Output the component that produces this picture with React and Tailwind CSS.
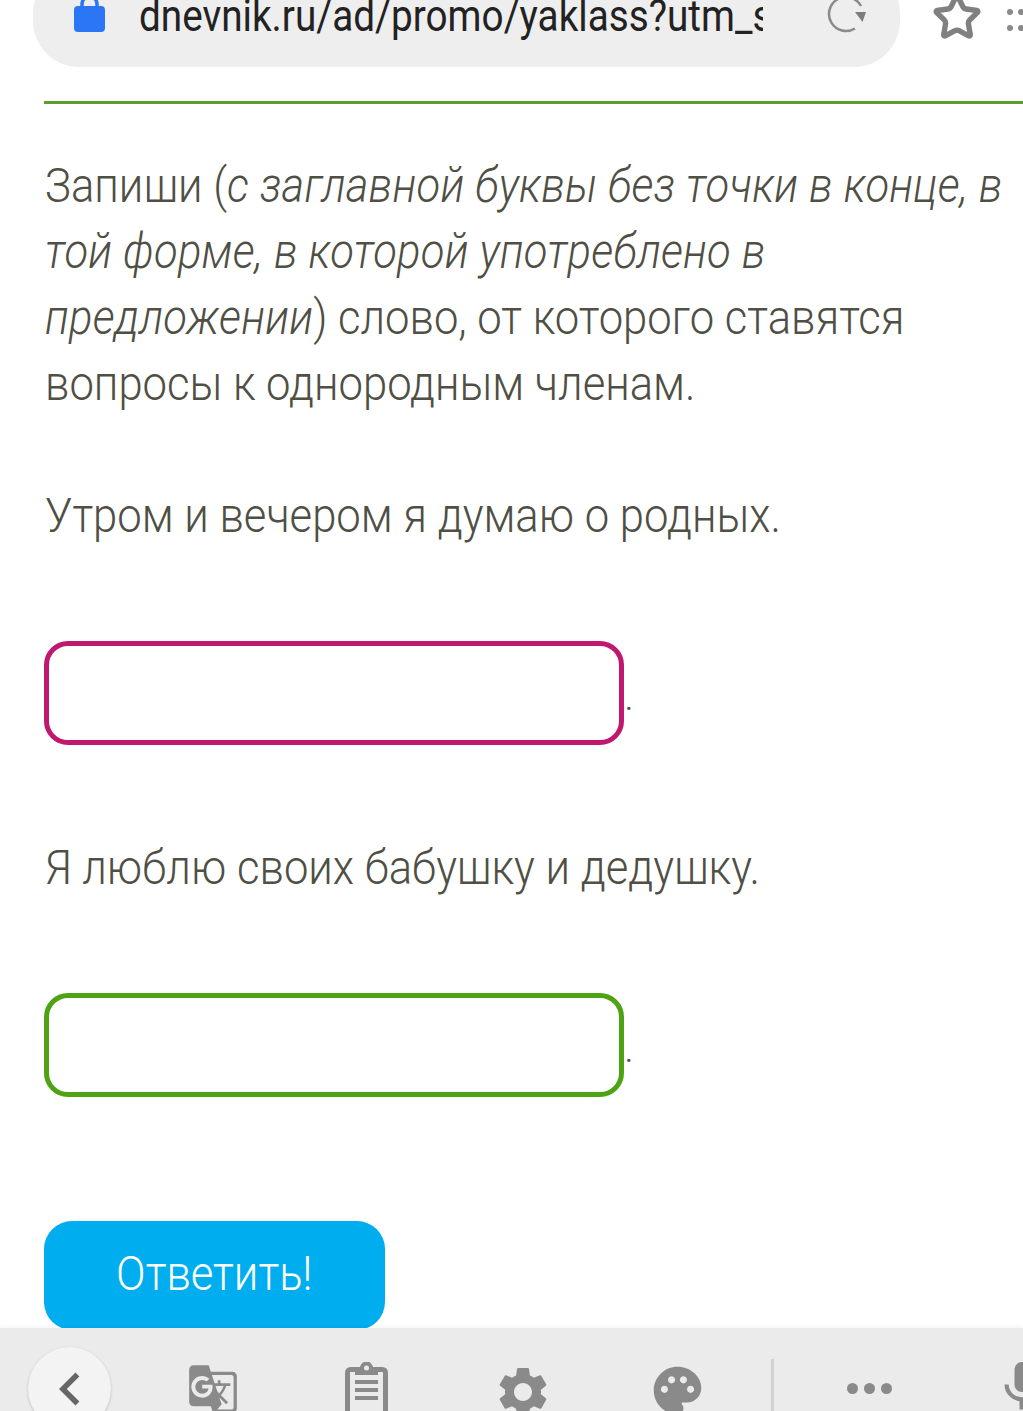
import React from "react";
import { Star } from "lucide-react";
import { MdGTranslate, MdSettings, MdPalette, MdMic, MdChevronLeft } from "react-icons/md";

const Field = ({ border }) => (
  <div className="flex items-end">
    <div className={`w-[580px] h-[104px] rounded-[24px] border-[5px] bg-white shrink-0 ${border}`}></div>
    <span className="text-[#555] text-[30px] font-normal leading-none ml-[1px] mb-[30px]">.</span>
  </div>
);

const Line = ({ children }) => (
  <div className="h-[66px] leading-[66px] whitespace-nowrap origin-left scale-x-[0.89] w-[1100px]">{children}</div>
);

const Em = ({ children }) => <i className="tracking-[0.25px]">{children}</i>;

export default function App() {
  return (
    <div className="h-[1411px] w-[1023px] overflow-hidden bg-white flex flex-col font-['Roboto',sans-serif]">
      {/* address bar */}
      <div className="flex items-center h-[67px] shrink-0 overflow-hidden">
        <div className="ml-[33px] w-[867px] h-[100px] -mt-[33px] shrink-0 rounded-[46px] bg-[#eeeeee] flex items-center pl-[41px]">
          <svg width="31" height="36" viewBox="0 0 31 36" className="shrink-0 -mt-[7px]">
            <path d="M8 14V8a7.5 7.5 0 0 1 15 0v6" fill="none" stroke="#2a76f5" strokeWidth="3.5" />
            <rect x="0" y="10" width="31" height="26" rx="4" fill="#2a76f5" />
          </svg>
          <div className="ml-[34px] -mt-[3px] w-[624px] overflow-hidden h-[50px] shrink-0">
            <div className="whitespace-nowrap w-[800px] origin-left scale-x-[0.86] text-[45px] leading-[50px] text-[#222] font-['Roboto',sans-serif]">
              dnevnik.ru/ad/promo/yaklass?utm_source
            </div>
          </div>
          <svg width="40" height="36" viewBox="0 0 40 36" className="ml-[64px] shrink-0" fill="none">
            <path d="M28 29.5A17 17 0 1 1 34 7" stroke="#8b8b8b" strokeWidth="2.5" />
            <path d="M28 13h11l-3.5 10z" fill="#7d7d7d" />
          </svg>
        </div>
        <Star size={50} strokeWidth={2.6} className="ml-[32px] -mt-[33px] text-[#808080] shrink-0" />
        <div className="ml-[25px] -mt-[28px] grid grid-cols-2 gap-x-[5px] gap-y-[10px] shrink-0">
          <span className="w-[6px] h-[6px] rounded-full bg-[#8a8a8a]"></span>
          <span className="w-[6px] h-[6px] rounded-full bg-[#8a8a8a]"></span>
          <span className="w-[6px] h-[6px] rounded-full bg-[#8a8a8a]"></span>
          <span className="w-[6px] h-[6px] rounded-full bg-[#8a8a8a]"></span>
        </div>
      </div>

      {/* task */}
      <div className="ml-[44px] mt-[34px] h-[3px] bg-[#5a9e32] shrink-0"></div>
      <div className="ml-[45px] mt-[49px] h-[1175px] shrink-0 text-[49px] font-light text-[#4f4f45]">
        <Line>Запиши (<Em>с заглавной буквы без точки в конце, в</Em></Line>
        <Line><Em>той форме, в которой употреблено в</Em></Line>
        <Line><Em>предложении</Em>) слово, от которого ставятся</Line>
        <Line>вопросы к однородным членам.</Line>
        <div className="h-[66px]"></div>
        <Line>Утром и вечером я думаю о родных.</Line>
        <div className="-ml-[1px] mt-[92px]"><Field border="border-[#c0186f]" /></div>
        <div className="mt-[90px]"><Line>Я люблю своих бабушку и дедушку.</Line></div>
        <div className="-ml-[1px] mt-[92px]"><Field border="border-[#4da314]" /></div>
        <button className="block -ml-[1px] mt-[124px] w-[341px] h-[109px] pb-[4px] rounded-[28px] bg-[#00aeef] text-white text-[49px] font-light">
          <span className="inline-block scale-x-[0.89]">Ответить!</span>
        </button>
      </div>

      {/* keyboard toolbar */}
      <div className="h-[83px] shrink-0 overflow-hidden bg-[#ebebeb] flex items-start shadow-[0_-2px_3px_rgba(0,0,0,0.03)]">
        <div className="ml-[28px] mt-[19px] w-[83px] h-[83px] shrink-0 rounded-full bg-[#f3f3f3] shadow-[0_1px_3px_rgba(0,0,0,0.2)] flex items-center justify-center">
          <MdChevronLeft size={66} className="text-[#666]" />
        </div>
        <MdGTranslate size={52} className="ml-[76px] mt-[35px] shrink-0 text-[#8a8a8a]" />
        <svg width="43" height="50" viewBox="0 0 43 50" className="ml-[106px] mt-[34px] shrink-0" fill="none">
          <rect x="2.5" y="7.5" width="38" height="50" rx="3" stroke="#8a8a8a" strokeWidth="5" />
          <path d="M10 6h5a6.5 6.5 0 0 1 13 0h5v7H10z" fill="#8a8a8a" />
          <circle cx="21.5" cy="6" r="2.5" fill="#ebebeb" />
          <path d="M10 20h23M10 28h23M10 36h23" stroke="#8a8a8a" strokeWidth="4" />
        </svg>
        <MdSettings size={60} className="ml-[105px] mt-[34px] shrink-0 text-[#8a8a8a]" />
        <MdPalette size={57} className="ml-[96px] mt-[34px] shrink-0 text-[#8a8a8a]" />
        <div className="ml-[65px] mt-[31px] w-[3px] h-[60px] shrink-0 bg-[#d2d2d2]"></div>
        <div className="ml-[73px] mt-[55px] flex gap-[6px] shrink-0">
          <span className="w-[11px] h-[11px] rounded-full bg-[#8a8a8a]"></span>
          <span className="w-[11px] h-[11px] rounded-full bg-[#8a8a8a]"></span>
          <span className="w-[11px] h-[11px] rounded-full bg-[#8a8a8a]"></span>
        </div>
        <MdMic size={60} className="ml-[100px] mt-[29px] shrink-0 text-[#8a8a8a]" />
      </div>
    </div>
  );
}
